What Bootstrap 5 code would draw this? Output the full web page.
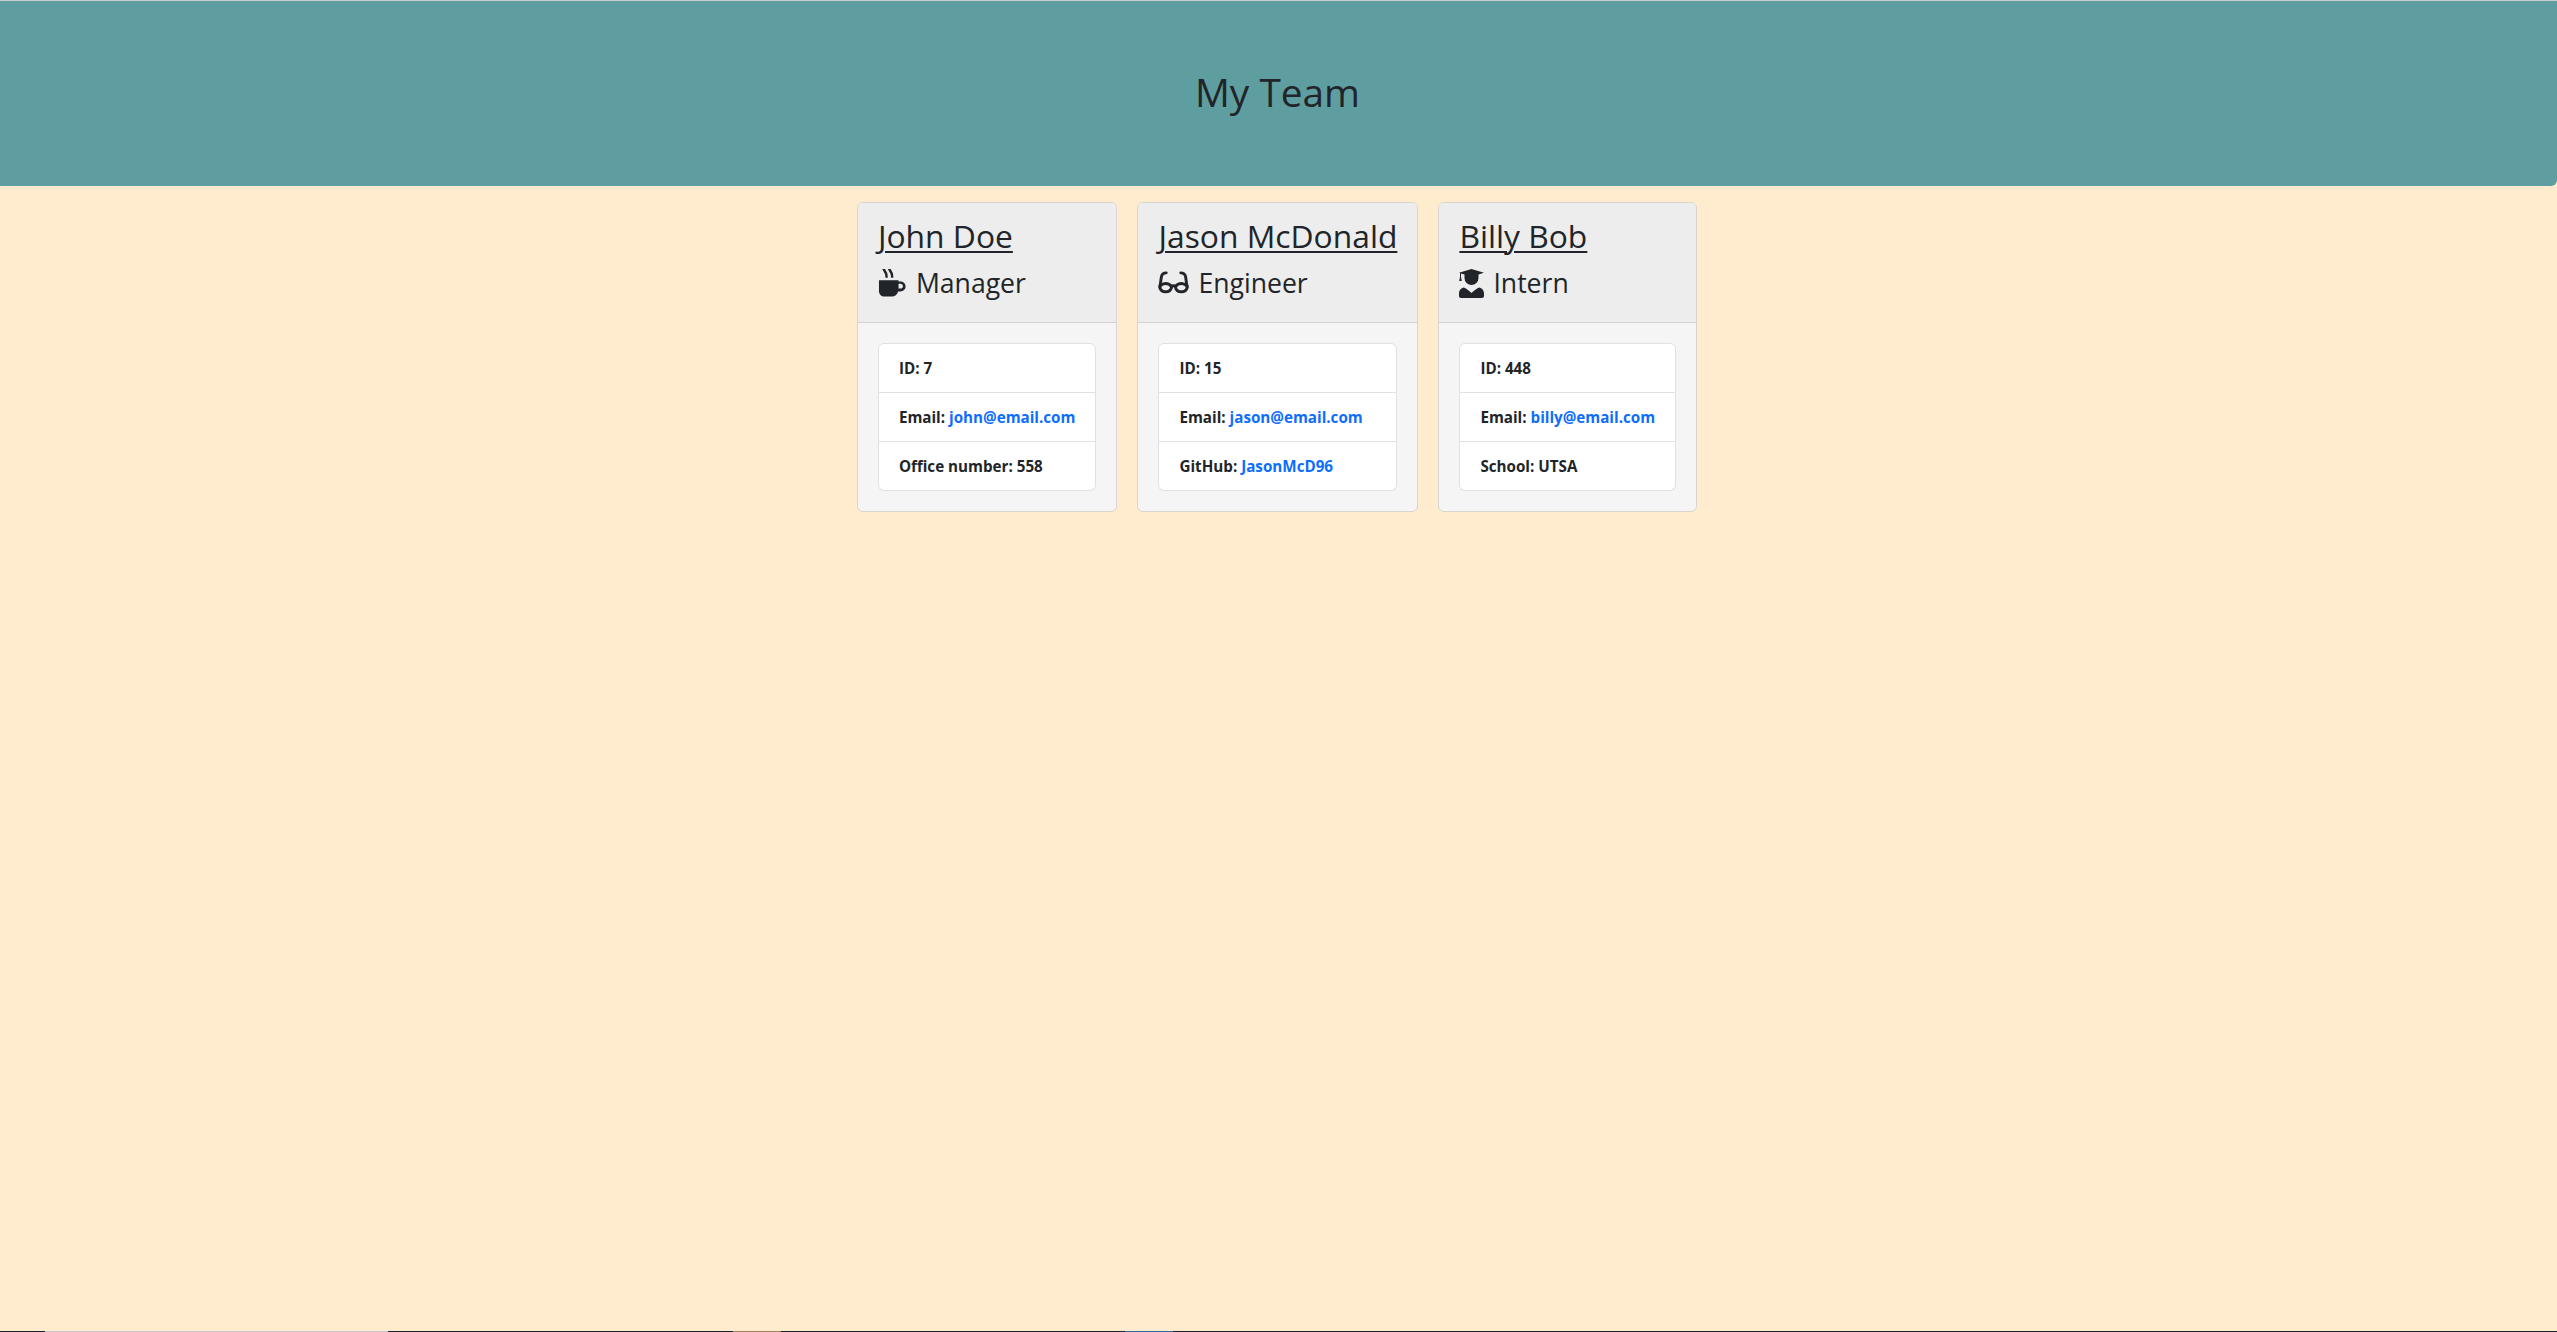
<!DOCTYPE html>
<html lang="en">
<head>
<meta charset="utf-8">
<title>My Team</title>
<link href="https://cdn.jsdelivr.net/npm/bootstrap@5.3.0/dist/css/bootstrap.min.css" rel="stylesheet">
<style>
html, body { height: 100%; }
body { background: #ffebcd; font-family: "Open Sans", "Noto Sans", sans-serif; color: #212529; display: flex; flex-direction: column; }
.team-banner { background: #5f9ea0; height: 186px; border-top: 1px solid #c9cdd0; border-radius: 0 0 6px 0; padding: 0 2px 3px 0; }
.team-banner h1 { font-size: 38.8px; font-weight: 500; margin: 0; }
.team-row { gap: 20px; padding: 16px 3px 0 0; }
.person { background: #f5f5f5; border-color: #d9d6d0; }
.person .card-header { background: #ededed; padding: 14px 20px 0; height: 120px; border-bottom-color: #d2d2d2; }
.person .card-body { padding: 20px; }
.person-name { font-size: 31.8px; line-height: 38px; font-weight: 400; margin: 0 0 12px; text-decoration: underline; text-decoration-thickness: 2px; text-underline-offset: 3px; white-space: nowrap; }
.person-role { font-size: 26.6px; line-height: 32px; font-weight: 400; margin: 0; display: flex; align-items: center; gap: 9px; }
.person-role svg { flex: none; }
.person .list-group-item { font-size: 15.2px; font-weight: 700; padding: 12px 20px; line-height: 24px; white-space: nowrap; }
.person .list-group-item + .list-group-item { margin-top: 0; border-top-width: 0; }
.person a { color: #0d6efd; text-decoration: none; }
.taskbar-strip { height: 1px; margin-top: auto; background: #1a2230; display: flex; }
.strip-gap { width: 45px; }
.strip-light { width: 343px; background: #c8c8c8; }
.strip-mid { width: 345px; }
.strip-brown { width: 48px; background: #a5825f; }
.strip-mid2 { width: 344px; }
.strip-blue { width: 48px; background: #2a6c9f; }
</style>
</head>
<body>
<header class="team-banner d-flex align-items-center justify-content-center">
  <h1>My Team</h1>
</header>
<main class="team-row d-flex justify-content-center align-items-start">
  <div class="card person">
    <div class="card-header">
      <h2 class="person-name">John Doe</h2>
      <h3 class="person-role">
        <svg width="29" height="28" viewBox="0 0 29 30" fill="#212529"><path d="M0 12h21v1.500h2c3 0 5.500 2.200 5.500 5.200s-2.500 5.300-5.500 5.300h-2.500C19.500 27.500 17 29.500 14 29.500H6c-3.500 0-6-2.500-6-6zM21 15.800V21h2c1.500 0 2.700-1.100 2.700-2.600s-1.200-2.600-2.700-2.600z"/><path d="M3.500 0 6.500 0 9 4.500 9.500 9.500 7 9.500 6.500 5.500zM9.500 0 12.500 0 15 4.500 15.500 9.500 13 9.500 12.500 5.500z"/></svg>
        Manager
      </h3>
    </div>
    <div class="card-body">
      <ul class="list-group">
        <li class="list-group-item">ID: 7</li>
        <li class="list-group-item">Email: <a href="#">john@email.com</a></li>
        <li class="list-group-item">Office number: 558</li>
      </ul>
    </div>
  </div>
  <div class="card person">
    <div class="card-header">
      <h2 class="person-name">Jason McDonald</h2>
      <h3 class="person-role">
        <svg width="31" height="24" viewBox="0 0 32 24" fill="none" stroke="#212529" stroke-width="3" stroke-linecap="round"><path d="M2 15c2-1.800 3.800-2.500 5.800-2.500 2.500 0 4.700 1 6 3v1.500a6 5 0 0 1-11.800 0z"/><path d="M30 15c-2-1.800-3.800-2.500-5.800-2.500-2.500 0-4.700 1-6 3v1.500a6 5 0 0 0 11.800 0z"/><path d="M13.800 15.500c1.500-.8 3-.8 4.400 0M2 16 3.500 5.500C4 3 6 1.500 8.500 1.500M30 16 28.500 5.500C28 3 26 1.500 23.500 1.500"/></svg>
        Engineer
      </h3>
    </div>
    <div class="card-body">
      <ul class="list-group">
        <li class="list-group-item">ID: 15</li>
        <li class="list-group-item">Email: <a href="#">jason@email.com</a></li>
        <li class="list-group-item">GitHub: <a href="#">JasonMcD96</a></li>
      </ul>
    </div>
  </div>
  <div class="card person">
    <div class="card-header">
      <h2 class="person-name">Billy Bob</h2>
      <h3 class="person-role">
        <svg width="25" height="29" viewBox="0 0 25 29" fill="#212529"><path d="M12.500 0 25 3.800 19.500 5.500V9a7 7 0 0 1-14 0V5.500L2 4.500V8l.8 4H.2L1 8V4L0 3.800z"/><path d="M5 18.500c2 1 3.500 2 7.500 5.500 4-3.500 5.500-4.500 7.500-5.500 3 .4 5 3 5 6V27c0 1.200-1 2-2 2H2c-1 0-2-.8-2-2v-2.500c0-3 2-5.600 5-6z"/></svg>
        Intern
      </h3>
    </div>
    <div class="card-body">
      <ul class="list-group">
        <li class="list-group-item">ID: 448</li>
        <li class="list-group-item">Email: <a href="#">billy@email.com</a></li>
        <li class="list-group-item">School: UTSA</li>
      </ul>
    </div>
  </div>
</main>
<div class="taskbar-strip"><span class="strip-gap"></span><span class="strip-light"></span><span class="strip-mid"></span><span class="strip-brown"></span><span class="strip-mid2"></span><span class="strip-blue"></span></div>
<script src="https://cdn.jsdelivr.net/npm/bootstrap@5.3.0/dist/js/bootstrap.bundle.min.js"></script>
</body>
</html>
